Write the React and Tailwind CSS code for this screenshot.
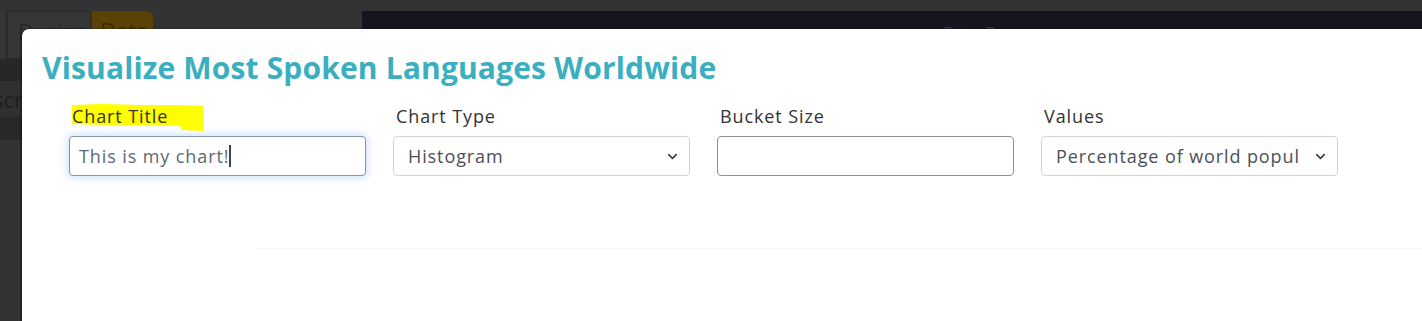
import { ChevronDown } from "lucide-react";

const fields = [
  { label: "Chart Title", kind: "text", value: "This is my chart!", focused: true },
  { label: "Chart Type", kind: "select", value: "Histogram" },
  { label: "Bucket Size", kind: "text", value: "" },
  { label: "Values", kind: "select", value: "Percentage of world population" },
];

const Field = ({ field, highlight }) => (
  <div className="flex flex-col w-[297px]">
    <div className="relative h-[34px] pl-[3px]">
      {highlight && (
        <svg className="absolute left-[3px] top-[1px]" width="134" height="28" viewBox="0 0 134 28">
          <polygon points="0,2 30,1 70,2 108,2 131,3 131,28 110,27 108,23 70,22 30,22 0,21" fill="#ffff00" />
        </svg>
      )}
      <span className="relative text-[18px] leading-[28px] tracking-[0.05em] text-[#333]">{field.label}</span>
    </div>
    {field.kind === "text" ? (
      <div
        className={
          field.focused
            ? "h-[40px] rounded-[4px] border border-[#8597ac] bg-white flex items-center px-[9px] shadow-[0_0_7px_2px_rgba(120,170,240,0.35)]"
            : "h-[40px] rounded-[4px] border border-[#8c9298] bg-white flex items-center px-[9px]"
        }
      >
        <span className="text-[18px] tracking-[0.05em] text-[#5d6874] whitespace-nowrap">{field.value}</span>
        {field.focused && <span className="w-[2px] h-[22px] bg-[#3c4650]"></span>}
      </div>
    ) : (
      <div className="h-[40px] rounded-[4px] border border-[#ced4da] bg-white flex items-center pl-[14px] pr-[9px] gap-[14px]">
        <span className="flex-1 text-[18px] tracking-[0.05em] text-[#495057] whitespace-nowrap overflow-hidden">{field.value}</span>
        <ChevronDown size={15} strokeWidth={2.5} className="text-[#343a40]" />
      </div>
    )}
  </div>
);

export default function App() {
  return (
    <div className="relative w-full h-[321px] overflow-hidden bg-[#333333] font-['Open_Sans',sans-serif]">
      {/* dimmed app behind the modal */}
      <div className="flex h-[11px]"></div>
      <div className="flex h-[48px]">
        <div className="w-[7px] border-r border-[#2a2a2a] bg-[#353535]"></div>
        <div className="w-[84px] border border-[#2a2a2a] bg-[#363636] pl-[10px] pt-[3px] text-[22px] text-[#262626]">Design</div>
        <div className="w-[61px] ml-[1px] rounded-tr-[6px] bg-[#5a4106] pl-[8px] pt-[3px] text-[22px] text-[#3a2a04]">Data</div>
        <div className="w-[209px]"></div>
        <div className="flex-1 bg-[#16141e] flex justify-center pt-[9px] text-[17px] text-[#3b3a40] pl-[210px]">Data Browser</div>
      </div>
      <div className="w-[22px] h-[22px] bg-[#272727]"></div>
      <div className="w-[22px] h-[36px] bg-[#303030] overflow-hidden text-[22px] leading-[36px] text-[#1e1e1e] -indent-[7px]">scr</div>
      <div className="w-[22px] h-[23px] bg-[#282828]"></div>

      {/* modal */}
      <div className="absolute left-[22px] top-[29px] w-[1420px] h-[320px] bg-white rounded-tl-[7px] shadow-[-1px_0_2px_rgba(0,0,0,0.5)]">
        <h1 className="pl-[20px] pt-[19px] text-[30px] leading-[40px] font-bold tracking-[0.005em] text-[#3aafc0]">
          Visualize Most Spoken Languages Worldwide
        </h1>
        <div className="flex gap-[27px] pl-[47px] pt-[14px]">
          {fields.map((f, i) => (
            <Field key={f.label} field={f} highlight={i === 0} />
          ))}
        </div>
        <div className="ml-[234px] mt-[72px] h-px bg-[#f6f6f6]"></div>
      </div>
    </div>
  );
}
